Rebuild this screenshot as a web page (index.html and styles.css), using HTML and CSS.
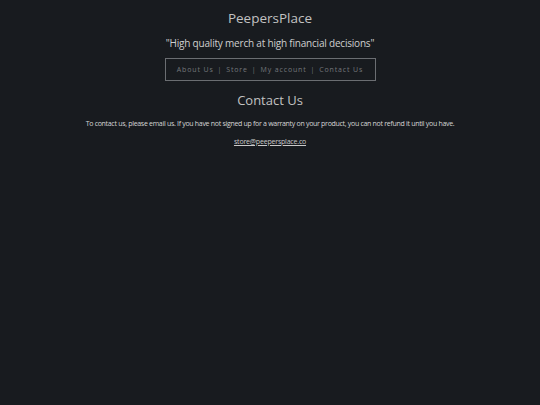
FILE: index.html
```html
<!DOCTYPE html>
<html>
<head>
<meta charset="utf-8">
<link rel="stylesheet" href="styles.css">
</head>
<body>
<header class="header">
  <h1 class="title">PeepersPlace</h1>
  <p class="tagline">"High quality merch at high financial decisions"</p>
  <nav class="nav">
    <a href="#">About Us</a><span class="sep">|</span><a href="#">Store</a><span class="sep">|</span><a href="#">My account</a><span class="sep">|</span><a href="#">Contact Us</a>
  </nav>
</header>
<main class="content">
  <h2 class="heading">Contact Us</h2>
  <p class="text">To contact us, please email us. If you have not signed up for a warranty on your product, you can not refund it until you have.</p>
  <p class="email"><a href="#">store@peepersplace.co</a></p>
</main>
</body>
</html>
```
FILE: styles.css
```css
html, body {
  margin: 0;
  padding: 0;
  background: #181b1f;
  height: 100%;
}
body {
  font-family: "Open Sans", sans-serif;
  color: #c8c8c8;
  text-align: center;
}
.header {
  display: flex;
  flex-direction: column;
  align-items: center;
  padding-top: 9px;
}
.title {
  margin: 0;
  font-size: 13.5px;
  font-weight: 400;
  line-height: 18px;
  color: #c2c2c2;
}
.tagline {
  margin: 9px 0 0;
  font-size: 10px;
  line-height: 14px;
  color: #cfcfcf;
  letter-spacing: -0.2px;
}
.nav {
  margin-top: 8px;
  border: 1px solid #6b6e72;
  width: 211px;
  height: 23px;
  box-sizing: border-box;
  display: flex;
  align-items: center;
  justify-content: center;
  font-size: 7px;
  letter-spacing: 0.85px;
  color: #74777b;
}
.nav a {
  color: #74777b;
  text-decoration: none;
}
.sep {
  margin: 0 4px;
}
.content {
  display: flex;
  flex-direction: column;
  align-items: center;
}
.heading {
  margin: 10px 0 0;
  font-size: 13px;
  font-weight: 400;
  line-height: 18px;
  color: #c2c2c2;
}
.text {
  margin: 10px 0 0;
  font-size: 7px;
  line-height: 10px;
  letter-spacing: -0.3px;
  color: #d6d6d6;
}
.email {
  margin: 8px 0 0;
  font-size: 7px;
  line-height: 10px;
  letter-spacing: -0.2px;
}
.email a {
  color: #c9c9c9;
}
```
